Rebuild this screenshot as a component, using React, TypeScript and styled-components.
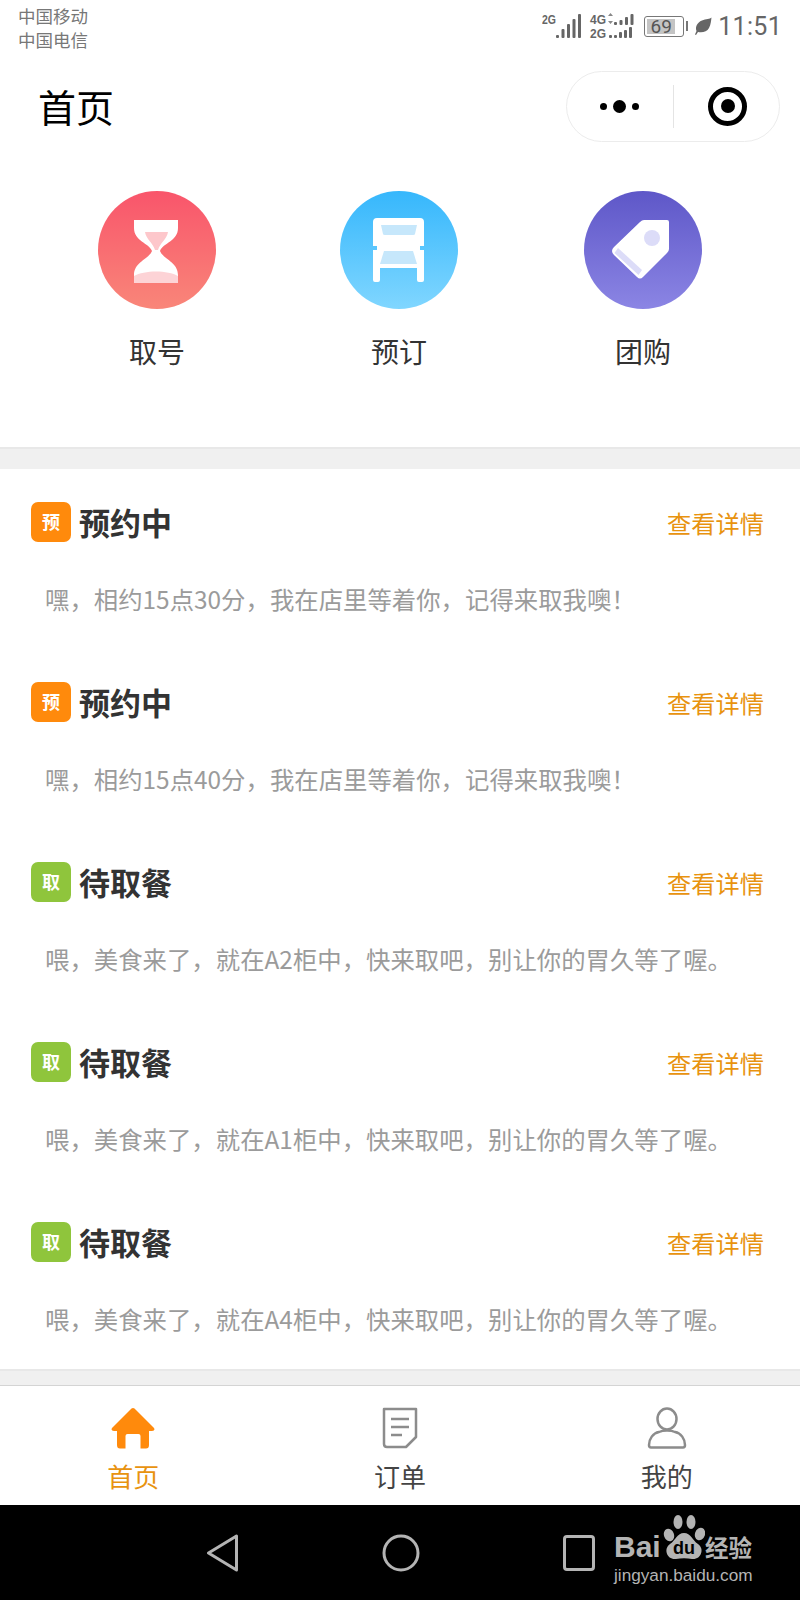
import React from "react";
import styled, { createGlobalStyle } from "styled-components";

const CJK = `"Noto Sans CJK SC", "Noto Sans", sans-serif`;

const orders = [
  { tag: "预", tagColor: "#ff8a0c", title: "预约中", text: "嘿，相约15点30分，我在店里等着你，记得来取我噢！" },
  { tag: "预", tagColor: "#ff8a0c", title: "预约中", text: "嘿，相约15点40分，我在店里等着你，记得来取我噢！" },
  { tag: "取", tagColor: "#8fc53c", title: "待取餐", text: "喂，美食来了，就在A2柜中，快来取吧，别让你的胃久等了喔。" },
  { tag: "取", tagColor: "#8fc53c", title: "待取餐", text: "喂，美食来了，就在A1柜中，快来取吧，别让你的胃久等了喔。" },
  { tag: "取", tagColor: "#8fc53c", title: "待取餐", text: "喂，美食来了，就在A4柜中，快来取吧，别让你的胃久等了喔。" },
];

export default function App(): JSX.Element {
  return (
    <Page>
      <GlobalStyle />
      <StatusBar>
        <Carriers>
          <div>中国移动</div>
          <div>中国电信</div>
        </Carriers>
        <StatusRight>
          <SignalIcon />
          <Battery>
            <BatteryLevel>69</BatteryLevel>
          </Battery>
          <BatteryTip />
          <LeafIcon />
          <Clock>11:51</Clock>
        </StatusRight>
      </StatusBar>

      <NavBar>
        <NavTitle>首页</NavTitle>
        <Capsule>
          <CapsuleCell>
            <Dot $size={7} />
            <Dot $size={13} />
            <Dot $size={7} />
          </CapsuleCell>
          <CapsuleDivider />
          <CapsuleCell>
            <TargetRing>
              <Dot $size={14} />
            </TargetRing>
          </CapsuleCell>
        </Capsule>
      </NavBar>

      <Shortcuts>
        <Shortcut>
          <ShortcutCircle $from="#f9556b" $to="#f98679">
            <svg viewBox="0 0 118 118" width="118" height="118">
              <path d="M36 29H80V37C80 50 65 52 62 60C65 68 80 71 80 84V92H36V84C36 71 51 68 54 60C51 52 36 50 36 37Z" fill="#fff" />
              <path d="M47 41H70C69 48 62 52 60 59H57C55 52 48 48 47 41Z" fill="#fdc7cb" />
              <path d="M36 85C46 79 70 79 80 85V92H36Z" fill="#fdd3d6" />
            </svg>
          </ShortcutCircle>
          <ShortcutLabel>取号</ShortcutLabel>
        </Shortcut>
        <Shortcut>
          <ShortcutCircle $from="#36b7fc" $to="#80d6ff">
            <svg viewBox="0 0 118 118" width="118" height="118">
              <path d="M37 27H80Q84 27 84 31V55H80V59H84V89Q84 91 82 91H79Q77 91 77 89V77H40V89Q40 91 38 91H35Q33 91 33 89V59H37V55H33V31Q33 27 37 27Z" fill="#fff" />
              <path d="M41 34H77L75 43Q75 44 73 44H45Q43 44 43 43Z" fill="#c6e7fb" />
              <path d="M44 60H73L77 73H40Z" fill="#c6e7fb" />
            </svg>
          </ShortcutCircle>
          <ShortcutLabel>预订</ShortcutLabel>
        </Shortcut>
        <Shortcut>
          <ShortcutCircle $from="#5e57c8" $to="#8b85e4">
            <svg viewBox="0 0 118 118" width="118" height="118">
              <path d="M60 29H83Q85 29 85 31V58Q85 60 83 62L59 86Q56 89 53 86L30 64Q26 60 30 56L56 31Q58 29 60 29Z" fill="#fff" />
              <circle cx="68" cy="47" r="8" fill="#dcdcf8" />
              <path d="M34 57L58 79L54.500 84L30.500 62Z" fill="#dcdcf8" />
            </svg>
          </ShortcutCircle>
          <ShortcutLabel>团购</ShortcutLabel>
        </Shortcut>
      </Shortcuts>

      <Gap />

      <OrderList>
        {orders.map((order, i) => (
          <OrderRow key={i}>
            <OrderHeader>
              <Tag $color={order.tagColor}>{order.tag}</Tag>
              <OrderTitle>{order.title}</OrderTitle>
              <DetailLink>查看详情</DetailLink>
            </OrderHeader>
            <OrderText>{order.text}</OrderText>
          </OrderRow>
        ))}
      </OrderList>

      <BottomGap />

      <TabBar>
        <Tab>
          <svg viewBox="0 0 44 42" width="44" height="42">
            <path d="M22 1Q23.500 1 25 3L43 21Q44.500 24 41 24H38V38Q38 41.500 35 41.500H29.500V29Q29.500 27 27.500 27H16.500Q14.500 27 14.500 29V41.500H9Q6 41.500 6 38V24H3Q-.5 24 1 21L19 3Q20.500 1 22 1Z" fill="#ff8a0c" />
          </svg>
          <TabLabel $active>首页</TabLabel>
        </Tab>
        <Tab>
          <svg viewBox="0 0 36 42" width="36" height="42" fill="none" stroke="#8c8c8c">
            <path d="M2 2H34V30L24 40H5Q2 40 2 37Z" strokeWidth="2.500" strokeLinejoin="round" />
            <path d="M9 12H27M9 20H27M9 28H20" strokeWidth="2.500" />
          </svg>
          <TabLabel>订单</TabLabel>
        </Tab>
        <Tab>
          <svg viewBox="0 0 40 42" width="40" height="42" fill="none" stroke="#8c8c8c" strokeWidth="2.500">
            <ellipse cx="20" cy="12" rx="9.500" ry="10.500" />
            <path d="M12 25C6 26 2 32 2 38Q2 40.500 4 40.500H36Q38 40.500 38 38C38 32 34 26 28 25C24 23 16 23 12 25Z" />
          </svg>
          <TabLabel>我的</TabLabel>
        </Tab>
      </TabBar>

      <SystemBar>
        <SystemKeys>
          <svg viewBox="0 0 33 38" width="33" height="38" fill="none" stroke="#b4b4b4" strokeWidth="3">
            <path d="M30.500 2V36L2.500 19Z" strokeLinejoin="round" />
          </svg>
          <svg viewBox="0 0 38 38" width="38" height="38" fill="none" stroke="#b4b4b4" strokeWidth="3">
            <circle cx="19" cy="19" r="17" />
          </svg>
          <svg viewBox="0 0 32 36" width="32" height="36" fill="none" stroke="#b4b4b4" strokeWidth="3">
            <rect x="1.500" y="1.500" width="29" height="33" rx="2.500" />
          </svg>
        </SystemKeys>
        <Watermark>
          <WatermarkTop>
            <BaiText>Bai</BaiText>
            <PawBox>
              <svg viewBox="0 0 42 45" width="42" height="45">
                <g fill="#b4b4b4">
                  <ellipse cx="6" cy="20" rx="5" ry="6.500" transform="rotate(-20 6 20)" />
                  <ellipse cx="15" cy="7" rx="4.500" ry="7" />
                  <ellipse cx="28" cy="7" rx="4.500" ry="7" />
                  <ellipse cx="37" cy="19" rx="5" ry="6.500" transform="rotate(20 37 19)" />
                  <path d="M21 18C28 18 29 25 35 29C42 34 38 45 29 44C24 43 18 43 13 44C4 45 0 34 7 29C13 25 14 18 21 18Z" />
                </g>
              </svg>
              <DuText>du</DuText>
            </PawBox>
            <JingyanText>经验</JingyanText>
          </WatermarkTop>
          <WatermarkUrl>jingyan.baidu.com</WatermarkUrl>
        </Watermark>
      </SystemBar>
    </Page>
  );
}

function SignalIcon(): JSX.Element {
  const bars = (x: number, base: number, heights: number[], w: number, step: number) =>
    heights.map((h, i) => <rect key={i} x={x + i * step} y={base - h} width={w} height={h} rx="1" />);
  return (
    <svg viewBox="0 -2 92 30" width="92" height="30" fill="#666">
      <SmallNet x="0" y="11" textLength="14" lengthAdjust="spacingAndGlyphs">2G</SmallNet>
      {bars(14, 25, [3, 9, 14, 19, 24], 3, 5.500)}
      <SmallNet x="48" y="11" textLength="16" lengthAdjust="spacingAndGlyphs">4G</SmallNet>
      <path d="M66 3L68.500 0L71 3ZM66 8L68.500 11L71 8Z" fill="#888" />
      <SmallNet x="48" y="25" textLength="16" lengthAdjust="spacingAndGlyphs">2G</SmallNet>
      {bars(72, 12, [3, 5, 8, 11], 3, 5.500)}
      {bars(67, 25, [3, 3, 6, 8, 11], 3, 5)}
    </svg>
  );
}

function LeafIcon(): JSX.Element {
  return (
    <svg viewBox="0 0 18 18" width="18" height="18">
      <path d="M17.500 0.500C16 2 12 2 8 3.500C3 5.500 1 10 2.500 14L1 17.500L2 18L4 15C8 16 13 15 15 11C17 7.500 17 3.500 17.500 0.500Z" fill="#666" />
    </svg>
  );
}

const GlobalStyle = createGlobalStyle`
  html, body {
    margin: 0;
    padding: 0;
    background: #fff;
  }
  * {
    box-sizing: border-box;
  }
`;

const Page = styled.div`
  width: 800px;
  height: 1600px;
  display: flex;
  flex-direction: column;
  overflow: hidden;
  background: #fff;
  font-family: ${CJK};
`;

const StatusBar = styled.div`
  height: 62px;
  flex: none;
  display: flex;
  justify-content: space-between;
  padding: 4px 18px 0 18px;
`;

const Carriers = styled.div`
  font-size: 17.500px;
  line-height: 24px;
  color: #777;
`;

const StatusRight = styled.div`
  height: 30px;
  margin-top: 7px;
  display: flex;
  align-items: center;
`;

const SmallNet = styled.text`
  font-family: "Liberation Sans", sans-serif;
  font-size: 13px;
  font-weight: 700;
  fill: #666;
`;

const Battery = styled.div`
  width: 40px;
  height: 21px;
  margin-left: 10px;
  padding: 2px;
  border: 1px solid #777;
  border-radius: 3px;
  display: flex;
`;

const BatteryLevel = styled.div`
  flex: 1;
  margin-right: 6px;
  background: #c4c4c4;
  color: #555;
  font-family: Roboto, sans-serif;
  font-size: 19px;
  line-height: 15px;
  text-align: center;
`;

const BatteryTip = styled.div`
  width: 2px;
  height: 10px;
  margin: 0 6px 0 2px;
  background: #777;
`;

const Clock = styled.div`
  margin-left: 6px;
  color: #666;
  font-family: Roboto, sans-serif;
  font-size: 25px;
  letter-spacing: 0.3px;
`;

const NavBar = styled.div`
  height: 88px;
  flex: none;
  display: flex;
  align-items: center;
  justify-content: space-between;
  padding: 0 20px 0 38px;
`;

const NavTitle = styled.div`
  font-size: 38px;
  line-height: 50px;
  color: #000;
`;

const Capsule = styled.div`
  width: 214px;
  height: 71px;
  display: flex;
  align-items: center;
  border: 1px solid #ececec;
  border-radius: 36px;
`;

const CapsuleCell = styled.div`
  flex: 1;
  display: flex;
  align-items: center;
  justify-content: center;
  gap: 6px;
`;

const CapsuleDivider = styled.div`
  width: 1px;
  height: 43px;
  background: #e4e4e4;
`;

const Dot = styled.div<{ $size: number }>`
  width: ${(p) => p.$size}px;
  height: ${(p) => p.$size}px;
  border-radius: 50%;
  background: #000;
`;

const TargetRing = styled.div`
  width: 39px;
  height: 39px;
  margin-left: 3px;
  display: flex;
  align-items: center;
  justify-content: center;
  border: 5px solid #000;
  border-radius: 50%;
`;

const Shortcuts = styled.div`
  height: 297px;
  flex: none;
  display: grid;
  grid-template-columns: 242px 242px 246px;
  align-items: start;
  padding: 41px 0 0 36px;
`;

const Shortcut = styled.div`
  display: flex;
  flex-direction: column;
  align-items: center;
`;

const ShortcutCircle = styled.div<{ $from: string; $to: string }>`
  width: 118px;
  height: 118px;
  border-radius: 50%;
  overflow: hidden;
  background: linear-gradient(${(p) => p.$from}, ${(p) => p.$to});
  svg {
    display: block;
  }
`;

const ShortcutLabel = styled.div`
  margin-top: 22px;
  font-size: 28px;
  line-height: 40px;
  color: #333;
`;

const Gap = styled.div`
  height: 22px;
  flex: none;
  background: #f0f0f0;
  border-top: 2px solid #e8e8e8;
`;

const OrderList = styled.div`
  flex: none;
`;

const OrderRow = styled.div`
  height: 180px;
  padding: 33px 36px 0 31px;
`;

const OrderHeader = styled.div`
  display: flex;
  align-items: center;
  height: 40px;
`;

const Tag = styled.div<{ $color: string }>`
  width: 40px;
  height: 40px;
  display: flex;
  align-items: center;
  justify-content: center;
  padding-bottom: 3px;
  border-radius: 7px;
  background: ${(p) => p.$color};
  color: #fff;
  font-size: 18px;
  font-weight: 700;
`;

const OrderTitle = styled.div`
  margin: 0 0 2px 8px;
  font-size: 31px;
  font-weight: 700;
  color: #333;
`;

const DetailLink = styled.div`
  margin-left: auto;
  font-size: 24.250px;
  color: #e8930f;
`;

const OrderText = styled.div`
  margin: 39px 0 0 14px;
  font-size: 24.400px;
  line-height: 36px;
  color: #9b9b9b;
  white-space: nowrap;
`;

const BottomGap = styled.div`
  height: 17px;
  flex: none;
  background: #f0f0f0;
  border-top: 2px solid #e8e8e8;
  border-bottom: 1px solid #d4d4d4;
`;

const TabBar = styled.div`
  height: 119px;
  flex: none;
  display: grid;
  grid-template-columns: repeat(3, 1fr);
  padding-top: 21px;
  background: #fff;
`;

const Tab = styled.div`
  display: flex;
  flex-direction: column;
  align-items: center;
  svg {
    display: block;
    height: 42px;
  }
`;

const TabLabel = styled.div<{ $active?: boolean }>`
  margin-top: 9px;
  font-size: 26px;
  line-height: 36px;
  color: ${(p) => (p.$active ? "#e8930f" : "#444")};
`;

const SystemBar = styled.div`
  position: relative;
  flex: 1;
  background: #000;
`;

const SystemKeys = styled.div`
  display: flex;
  align-items: center;
  height: 38px;
  margin-top: 29px;
  padding-left: 206px;
  gap: 143px;
`;

const Watermark = styled.div`
  position: absolute;
  left: 614px;
  top: 10px;
  color: #b4b4b4;
`;

const WatermarkTop = styled.div`
  display: flex;
  align-items: flex-end;
  height: 45px;
`;

const BaiText = styled.div`
  width: 49px;
  font-family: "Liberation Sans", sans-serif;
  font-size: 30px;
  font-weight: 700;
  line-height: 26px;
`;

const PawBox = styled.div`
  position: relative;
  width: 42px;
  height: 45px;
  svg {
    display: block;
  }
`;

const DuText = styled.div`
  position: absolute;
  left: 10px;
  bottom: 3px;
  font-family: "Liberation Sans", sans-serif;
  font-size: 18px;
  font-weight: 700;
  line-height: 18px;
  color: #000;
`;

const JingyanText = styled.div`
  width: 48px;
  font-size: 23.500px;
  font-weight: 700;
  line-height: 26px;
  white-space: nowrap;
`;

const WatermarkUrl = styled.div`
  margin-top: 4px;
  font-family: "Liberation Sans", sans-serif;
  font-size: 17.200px;
  line-height: 22px;
`;
